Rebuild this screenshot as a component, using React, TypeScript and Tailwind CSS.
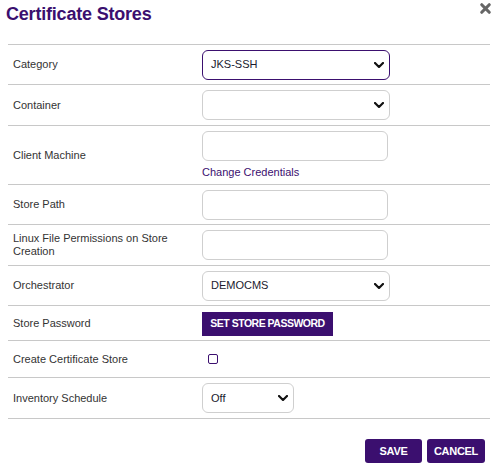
import { X } from 'lucide-react';

const PURPLE = 'bg-[#3b0f6f]';

const Chevron = () => (
  <svg
    viewBox="0 0 10 6"
    className="pointer-events-none absolute right-[6px] top-1/2 h-[6px] w-[10px] -translate-y-1/2"
  >
    <path d="M1 1 L5 5 L9 1" fill="none" stroke="#111" strokeWidth="2.2" strokeLinecap="round" strokeLinejoin="round" />
  </svg>
);

type SelectProps = { value: string; width: string; focused?: boolean };

const Select = ({ value, width, focused = false }: SelectProps) => (
  <div className={`relative ${width}`}>
    <div
      className={`flex h-[30px] items-center rounded-[6px] border bg-white pl-[8px] text-[11px] text-[#1a1a2e] ${
        focused ? 'border-[#3b0f6f]' : 'border-[#cfcfcf]'
      }`}
    >
      {value}
    </div>
    <Chevron />
  </div>
);

const TextInput = () => (
  <div className="h-[30px] w-[186px] rounded-[6px] border border-[#cfcfcf] bg-white" />
);

type RowProps = { label: string; height: string; children: React.ReactNode };

const Row = ({ label, height, children }: RowProps) => (
  <div className={`grid grid-cols-[194px_1fr] items-center border-b border-[#c8c8c8] ${height}`}>
    <div className="pl-[5px] pr-[20px] text-[11px] leading-[13px] text-[#333]">{label}</div>
    <div>{children}</div>
  </div>
);

const App = () => {
  return (
    <div className="h-[471px] w-[494px] bg-white font-['Liberation_Sans',Arial,sans-serif]">
      <div className="relative flex h-[44px] items-start">
        <h1 className="ml-[6px] mt-[3px] text-[18px] font-bold leading-[22px] tracking-[-0.2px] text-[#3b0f6f]">
          Certificate Stores
        </h1>
        <X className="absolute right-[1px] top-[1px] h-[15px] w-[15px] text-[#666]" strokeWidth={5} />
      </div>

      <div className="ml-[8px] w-[482px] border-t border-[#c8c8c8]">
        <Row label="Category" height="h-[40px]">
          <Select value="JKS-SSH" width="w-[188px]" focused />
        </Row>
        <Row label="Container" height="h-[41px]">
          <Select value="" width="w-[188px]" />
        </Row>
        <Row label="Client Machine" height="h-[59px]">
          <div className="flex flex-col">
            <TextInput />
            <span className="mt-[5px] text-[11px] leading-[13px] text-[#3b0f6f]">Change Credentials</span>
          </div>
        </Row>
        <Row label="Store Path" height="h-[40px]">
          <TextInput />
        </Row>
        <Row label="Linux File Permissions on Store Creation" height="h-[41px]">
          <TextInput />
        </Row>
        <Row label="Orchestrator" height="h-[40px]">
          <Select value="DEMOCMS" width="w-[188px]" />
        </Row>
        <Row label="Store Password" height="h-[35px]">
          <button
            className={`${PURPLE} h-[24px] w-[131px] text-[10.5px] font-bold tracking-[-0.5px] text-white`}
          >
            SET STORE PASSWORD
          </button>
        </Row>
        <Row label="Create Certificate Store" height="h-[37px]">
          <div className="ml-[6px] h-[10px] w-[10px] rounded-[2px] border-[1.5px] border-[#3b0f6f] bg-white" />
        </Row>
        <Row label="Inventory Schedule" height="h-[41px]">
          <Select value="Off" width="w-[92px]" />
        </Row>
      </div>

      <div className="mr-[9px] mt-[20px] flex justify-end gap-[5px]">
        <button
          className={`${PURPLE} h-[24px] w-[57px] rounded-[3px] text-[11px] font-bold tracking-[-0.3px] text-white`}
        >
          SAVE
        </button>
        <button
          className={`${PURPLE} h-[24px] w-[58px] rounded-[3px] text-[11px] font-bold tracking-[-0.3px] text-white`}
        >
          CANCEL
        </button>
      </div>
    </div>
  );
};

export default App;
